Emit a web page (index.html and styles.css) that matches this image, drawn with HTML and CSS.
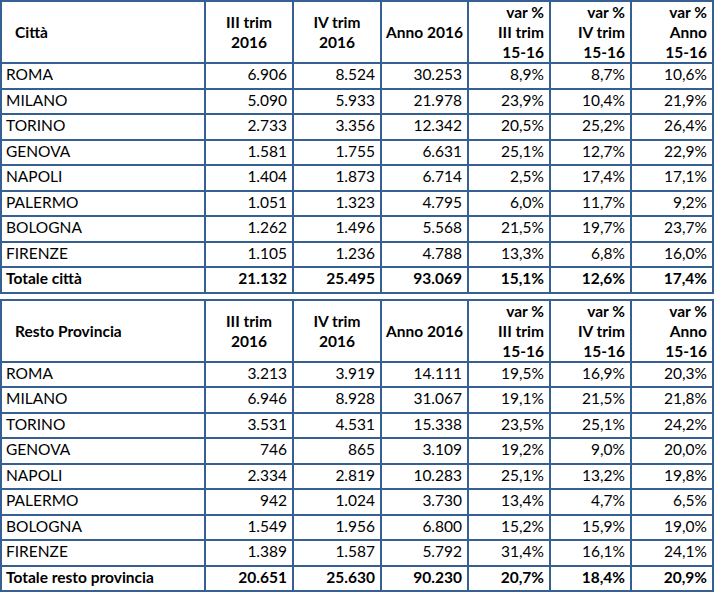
FILE: index.html
```html
<!DOCTYPE html>
<html lang="it">
<head>
<meta charset="utf-8">
<title>Tabella</title>
<link rel="stylesheet" href="styles.css">
</head>
<body>
<div class="tbl">
  <div class="h first">Città</div>
  <div class="h c">III trim<br>2016</div>
  <div class="h c">IV trim<br>2016</div>
  <div class="h c">Anno 2016</div>
  <div class="h r">var %<br>III trim<br>15-16</div>
  <div class="h r">var %<br>IV trim<br>15-16</div>
  <div class="h r">var %<br>Anno<br>15-16</div>

  <div class="d l">ROMA</div><div class="d">6.906</div><div class="d">8.524</div><div class="d">30.253</div><div class="d">8,9%</div><div class="d">8,7%</div><div class="d">10,6%</div>
  <div class="d l">MILANO</div><div class="d">5.090</div><div class="d">5.933</div><div class="d">21.978</div><div class="d">23,9%</div><div class="d">10,4%</div><div class="d">21,9%</div>
  <div class="d l">TORINO</div><div class="d">2.733</div><div class="d">3.356</div><div class="d">12.342</div><div class="d">20,5%</div><div class="d">25,2%</div><div class="d">26,4%</div>
  <div class="d l">GENOVA</div><div class="d">1.581</div><div class="d">1.755</div><div class="d">6.631</div><div class="d">25,1%</div><div class="d">12,7%</div><div class="d">22,9%</div>
  <div class="d l">NAPOLI</div><div class="d">1.404</div><div class="d">1.873</div><div class="d">6.714</div><div class="d">2,5%</div><div class="d">17,4%</div><div class="d">17,1%</div>
  <div class="d l">PALERMO</div><div class="d">1.051</div><div class="d">1.323</div><div class="d">4.795</div><div class="d">6,0%</div><div class="d">11,7%</div><div class="d">9,2%</div>
  <div class="d l">BOLOGNA</div><div class="d">1.262</div><div class="d">1.496</div><div class="d">5.568</div><div class="d">21,5%</div><div class="d">19,7%</div><div class="d">23,7%</div>
  <div class="d l">FIRENZE</div><div class="d">1.105</div><div class="d">1.236</div><div class="d">4.788</div><div class="d">13,3%</div><div class="d">6,8%</div><div class="d">16,0%</div>
  <div class="d l b">Totale città</div><div class="d b">21.132</div><div class="d b">25.495</div><div class="d b">93.069</div><div class="d b">15,1%</div><div class="d b">12,6%</div><div class="d b">17,4%</div>
</div>

<div class="tbl second">
  <div class="h first">Resto Provincia</div>
  <div class="h c">III trim<br>2016</div>
  <div class="h c">IV trim<br>2016</div>
  <div class="h c">Anno 2016</div>
  <div class="h r">var %<br>III trim<br>15-16</div>
  <div class="h r">var %<br>IV trim<br>15-16</div>
  <div class="h r">var %<br>Anno<br>15-16</div>

  <div class="d l">ROMA</div><div class="d">3.213</div><div class="d">3.919</div><div class="d">14.111</div><div class="d">19,5%</div><div class="d">16,9%</div><div class="d">20,3%</div>
  <div class="d l">MILANO</div><div class="d">6.946</div><div class="d">8.928</div><div class="d">31.067</div><div class="d">19,1%</div><div class="d">21,5%</div><div class="d">21,8%</div>
  <div class="d l">TORINO</div><div class="d">3.531</div><div class="d">4.531</div><div class="d">15.338</div><div class="d">23,5%</div><div class="d">25,1%</div><div class="d">24,2%</div>
  <div class="d l">GENOVA</div><div class="d">746</div><div class="d">865</div><div class="d">3.109</div><div class="d">19,2%</div><div class="d">9,0%</div><div class="d">20,0%</div>
  <div class="d l">NAPOLI</div><div class="d">2.334</div><div class="d">2.819</div><div class="d">10.283</div><div class="d">25,1%</div><div class="d">13,2%</div><div class="d">19,8%</div>
  <div class="d l">PALERMO</div><div class="d">942</div><div class="d">1.024</div><div class="d">3.730</div><div class="d">13,4%</div><div class="d">4,7%</div><div class="d">6,5%</div>
  <div class="d l">BOLOGNA</div><div class="d">1.549</div><div class="d">1.956</div><div class="d">6.800</div><div class="d">15,2%</div><div class="d">15,9%</div><div class="d">19,0%</div>
  <div class="d l">FIRENZE</div><div class="d">1.389</div><div class="d">1.587</div><div class="d">5.792</div><div class="d">31,4%</div><div class="d">16,1%</div><div class="d">24,1%</div>
  <div class="d l b">Totale resto provincia</div><div class="d b">20.651</div><div class="d b">25.630</div><div class="d b">90.230</div><div class="d b">20,7%</div><div class="d b">18,4%</div><div class="d b">20,9%</div>
</div>
</body>
</html>
```

FILE: styles.css
```css
html, body {
  margin: 0;
  padding: 0;
  background: #ffffff;
}

body {
  font-family: "Lato", "Liberation Sans", sans-serif;
  font-size: 15.5px;
  color: #000000;
  width: 714px;
}

.tbl {
  display: grid;
  grid-template-columns: 202px 86px 86px 85px 80px 79px 80px;
  grid-template-rows: 60px repeat(9, 23.5px);
  gap: 2px;
  padding: 2px;
  background: #366092;
  width: 714px;
  box-sizing: border-box;
}

.tbl.second {
  margin-top: 5px;
}

.tbl > div {
  background: #ffffff;
  display: flex;
  align-items: center;
  box-sizing: border-box;
  white-space: nowrap;
}

.h {
  font-weight: 700;
  line-height: 20px;
}

.h.first {
  padding-left: 13px;
}

.h.c {
  justify-content: center;
  text-align: center;
}

.h.r {
  justify-content: flex-end;
  text-align: right;
  padding-right: 5px;
}

.d {
  justify-content: flex-end;
  padding-right: 5px;
  padding-bottom: 3px;
}

.d.l {
  justify-content: flex-start;
  padding-left: 4px;
  padding-right: 0;
}

.b {
  font-weight: 700;
}
```
